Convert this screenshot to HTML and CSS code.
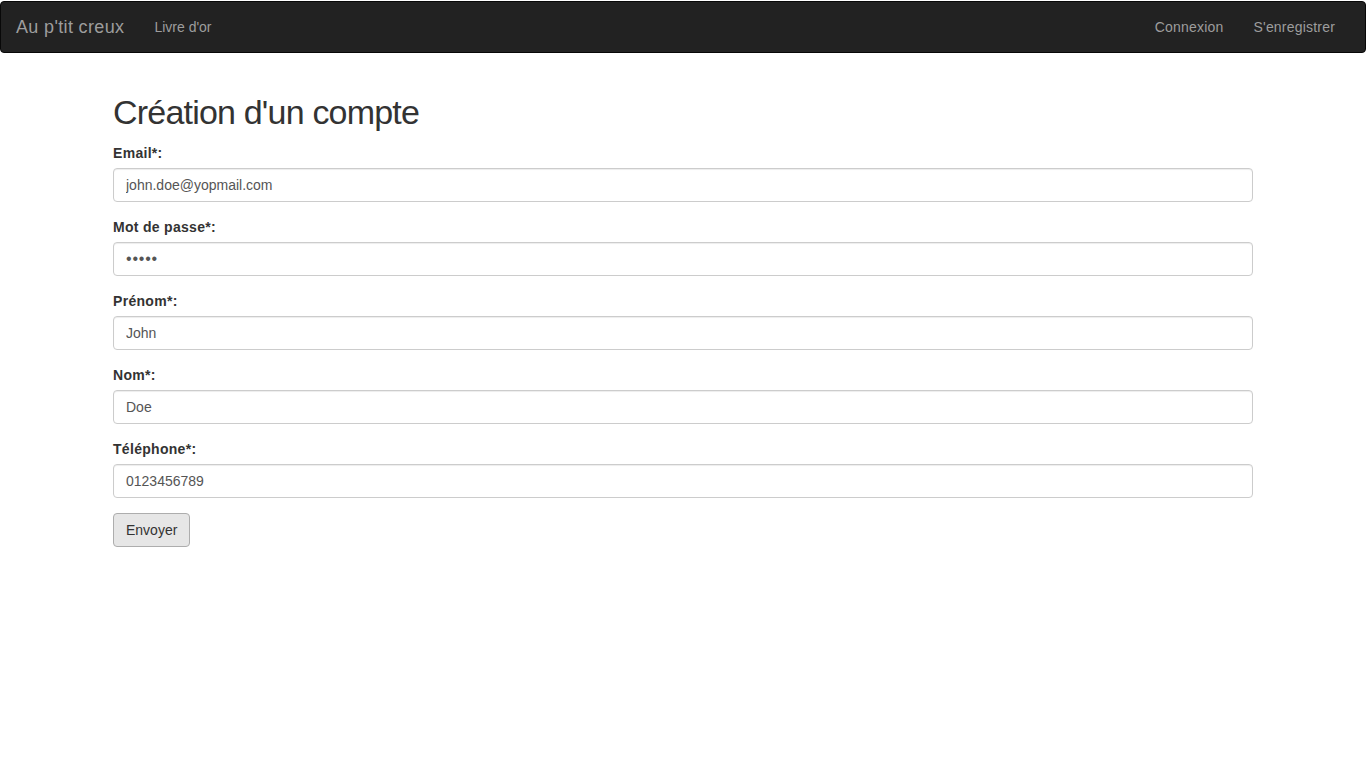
FILE: index.html
```html
<!DOCTYPE html>
<html lang="fr">
<head>
<meta charset="utf-8">
<title>Au p'tit creux</title>
<link rel="stylesheet" href="styles.css">
</head>
<body>
<nav class="navbar">
  <div class="navbar-inner">
    <div class="nav-left">
      <a class="brand" href="#">Au p'tit creux</a>
      <a class="nav-link" href="#">Livre d'or</a>
    </div>
    <div class="nav-right">
      <a class="nav-link nav-link-wide" href="#">Connexion</a>
      <a class="nav-link nav-link-wide" href="#">S'enregistrer</a>
    </div>
  </div>
</nav>
<main class="container">
  <h1>Création d'un compte</h1>
  <form>
    <div class="form-group">
      <label for="email">Email*:</label>
      <input class="form-control" id="email" type="email" value="john.doe@yopmail.com">
    </div>
    <div class="form-group">
      <label for="pwd">Mot de passe*:</label>
      <input class="form-control form-control-password" id="pwd" type="password" value="12345">
    </div>
    <div class="form-group">
      <label for="prenom">Prénom*:</label>
      <input class="form-control" id="prenom" type="text" value="John">
    </div>
    <div class="form-group">
      <label for="nom">Nom*:</label>
      <input class="form-control" id="nom" type="text" value="Doe">
    </div>
    <div class="form-group">
      <label for="tel">Téléphone*:</label>
      <input class="form-control" id="tel" type="text" value="0123456789">
    </div>
    <button class="btn" type="button">Envoyer</button>
  </form>
</main>
</body>
</html>
```
FILE: styles.css
```css
* { box-sizing: border-box; }
html, body { margin: 0; padding: 0; }
body {
  font-family: "Liberation Sans", Arial, sans-serif;
  font-size: 14px;
  line-height: 1.42857143;
  color: #333;
  background: #fff;
}
a { text-decoration: none; }
.navbar {
  background: #222;
  border: 1px solid #080808;
  border-radius: 4px;
  min-height: 50px;
  margin-top: 1px;
  margin-bottom: 20px;
}
.navbar-inner {
  display: flex;
  justify-content: space-between;
  padding: 0 15px 0 0;
}
.nav-left, .nav-right { display: flex; align-items: flex-start; }
.brand {
  display: block;
  height: 50px;
  padding: 15px;
  font-size: 18px;
  line-height: 20px;
  letter-spacing: 0.35px;
  color: #9d9d9d;
}
.nav-link {
  display: block;
  padding: 15px;
  line-height: 20px;
  color: #9d9d9d;
}
.nav-link-wide { letter-spacing: 0.2px; }
.container {
  display: flow-root;
  width: 1170px;
  margin: 0 auto;
  padding: 0 15px;
}
h1 {
  font-size: 34px;
  font-weight: 500;
  line-height: 39.6px;
  letter-spacing: -0.8px;
  margin: 20px 0 10px;
  color: #333;
}
.form-group { margin-bottom: 15px; }
label {
  display: inline-block;
  font-weight: bold;
  letter-spacing: 0.3px;
  margin-bottom: 5px;
}
.form-control {
  display: block;
  width: 100%;
  height: 34px;
  padding: 6px 12px;
  font-family: inherit;
  font-size: 14px;
  line-height: 1.42857143;
  color: #555;
  background: #fff;
  border: 1px solid #ccc;
  border-radius: 4px;
  box-shadow: inset 0 1px 1px rgba(0,0,0,.075);
}
.form-control-password {
  font-size: 16px;
  line-height: 20px;
  letter-spacing: 0.8px;
}
.btn {
  display: inline-block;
  padding: 6px 12px;
  font-family: inherit;
  font-size: 14px;
  line-height: 1.42857143;
  color: #333;
  background: #e6e6e6;
  border: 1px solid #adadad;
  border-radius: 4px;
}
```
